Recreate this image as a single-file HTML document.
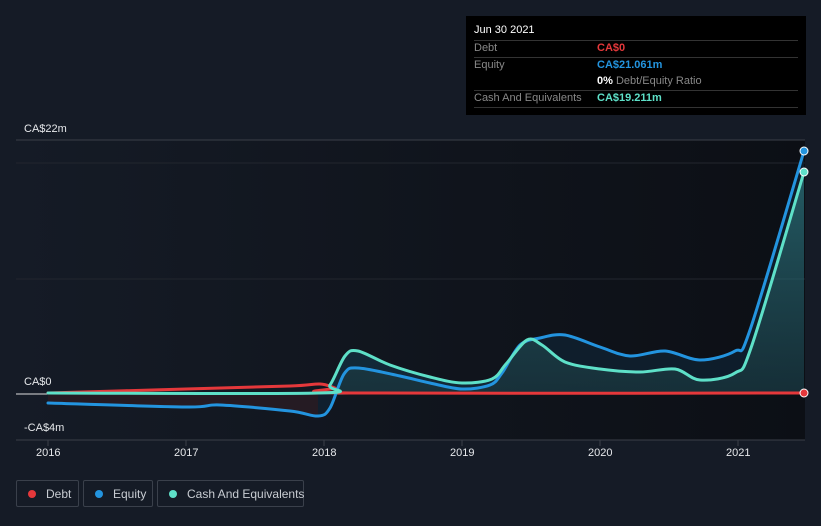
<!DOCTYPE html>
<html><head><meta charset="utf-8"><style>
html,body{margin:0;width:821px;height:526px;overflow:hidden}
body{background:#151b26;font-family:"Liberation Sans",sans-serif;position:relative}
.tt{position:absolute;left:466px;top:16px;width:340px;height:99px;background:#000;}
.tt div{position:absolute;font-size:11px;white-space:nowrap}
.ln{position:absolute;left:8px;width:324px;height:1px;background:#333}
.lg{position:absolute;top:480px;height:27px;border:1px solid #3a404b;border-radius:2px;color:#c8ccd2;font-size:12px;line-height:26px;box-sizing:border-box;white-space:nowrap}
.dot{display:inline-block;width:8px;height:8px;border-radius:50%;margin:0 10px 0 11px;vertical-align:0}
.lbl{position:absolute;color:#e6e8eb;font-size:11px}
</style></head><body>
<svg width="821" height="526" style="position:absolute;left:0;top:0">
<defs>
<linearGradient id="bg" x1="0" x2="1" y1="0" y2="0"><stop offset="0" stop-color="#151b26"/><stop offset="1" stop-color="#0c0f15"/></linearGradient>
<linearGradient id="tf" x1="0" x2="0" y1="0" y2="1"><stop offset="0" stop-color="#2f7f89" stop-opacity=".9"/><stop offset="1" stop-color="#1e4a55" stop-opacity=".7"/></linearGradient>
</defs>
<rect x="16" y="140" width="789" height="300" fill="url(#bg)"/>
<line x1="16" y1="140" x2="805" y2="140" stroke="#3a3f48"/>
<line x1="16" y1="163" x2="805" y2="163" stroke="#22262e"/>
<line x1="16" y1="279" x2="805" y2="279" stroke="#22262e"/>
<line x1="16" y1="440" x2="805" y2="440" stroke="#3a3f48"/>
<line x1="16" y1="394" x2="805" y2="394" stroke="#ddd" stroke-width="1"/>
<g stroke="#3a3f48"><line x1="48" y1="440" x2="48" y2="446"/><line x1="186" y1="440" x2="186" y2="446"/><line x1="324" y1="440" x2="324" y2="446"/><line x1="462" y1="440" x2="462" y2="446"/><line x1="600" y1="440" x2="600" y2="446"/><line x1="738" y1="440" x2="738" y2="446"/></g>
<path id="fc" fill="url(#tf)" opacity=".75"/>
<path id="fe" fill="#0f2335" opacity=".7"/>
<path id="fd" fill="#2a1a20" opacity=".8"/>
<g fill="none" stroke-width="3" stroke-linejoin="round" stroke-linecap="round">
<path id="ld" stroke="#e5383b"/>
<path id="le" stroke="#2394df"/>
<path id="lc" stroke="#5ee0c8"/>
</g>
<circle cx="804" cy="151" r="4" fill="#2394df" stroke="#fff"/>
<circle cx="804" cy="172" r="4" fill="#5ee0c8" stroke="#fff"/>
<circle cx="804" cy="393" r="4" fill="#e5383b" stroke="#fff"/>
</svg>
<script>
var D=[[48,393],[186,389],[290,386],[320,384],[335,388],[350,393],[804,393]];
var E=[[48,403],[186,407],[220,405],[290,411],[318,416],[330,408],[344,374],[358,368],[400,376],[430,383],[462,389],[490,385],[502,373],[520,345],[540,338],[565,335],[600,347],[630,356],[665,351],[700,360],[735,351],[750,330],[804,151]];
var C=[[48,393],[318,393],[330,385],[345,356],[358,351],[390,365],[430,377],[462,383],[492,379],[506,364],[527,340],[542,345],[565,362],[600,369],[640,372],[675,369],[700,380],[735,373],[752,345],[804,172]];
function sp(p){var s="M"+p[0];for(var i=0;i<p.length-1;i++){var a=p[i-1]||p[i],b=p[i],c=p[i+1],d=p[i+2]||c,t=.16;
s+=" C"+(b[0]+(c[0]-a[0])*t)+","+(b[1]+(c[1]-a[1])*t)+" "+(c[0]-(d[0]-b[0])*t)+","+(c[1]-(d[1]-b[1])*t)+" "+c;}return s;}
function rv(p){return sp(p.slice().reverse()).replace("M","L");}
document.getElementById("ld").setAttribute("d",sp(D));
document.getElementById("le").setAttribute("d",sp(E));
document.getElementById("lc").setAttribute("d",sp(C));
document.getElementById("fc").setAttribute("d",sp(C)+" L804,393 L48,393Z");
document.getElementById("fe").setAttribute("d",sp(E)+rv(C)+"Z");
document.getElementById("fd").setAttribute("d",sp(E.slice(0,5))+" L318,393 L48,393Z");
</script>
<div class="lbl" style="left:24px;top:123px">CA$22m</div>
<div class="lbl" style="left:24px;top:376px">CA$0</div>
<div class="lbl" style="left:24px;top:422px">-CA$4m</div>
<div class="lbl" style="left:36px;top:447px">2016</div>
<div class="lbl" style="left:174px;top:447px">2017</div>
<div class="lbl" style="left:312px;top:447px">2018</div>
<div class="lbl" style="left:450px;top:447px">2019</div>
<div class="lbl" style="left:588px;top:447px">2020</div>
<div class="lbl" style="left:726px;top:447px">2021</div>
<div class="tt">
<div style="left:8px;top:8px;color:#fff">Jun 30 2021</div>
<div class="ln" style="top:24px"></div>
<div style="left:8px;top:26px;color:#888">Debt</div><div style="left:131px;top:26px;color:#e5383b;font-weight:bold">CA$0</div>
<div class="ln" style="top:41px"></div>
<div style="left:8px;top:43px;color:#888">Equity</div><div style="left:131px;top:43px;color:#2394df;font-weight:bold">CA$21.061m</div>
<div style="left:131px;top:59px;color:#888"><b style="color:#fff">0%</b> Debt/Equity Ratio</div>
<div class="ln" style="top:74px"></div>
<div style="left:8px;top:76px;color:#888">Cash And Equivalents</div><div style="left:131px;top:76px;color:#5ee0c8;font-weight:bold">CA$19.211m</div>
<div class="ln" style="top:91px"></div>
</div>
<div class="lg" style="left:16px;width:63px"><span class="dot" style="background:#e5383b"></span>Debt</div>
<div class="lg" style="left:83px;width:70px"><span class="dot" style="background:#2394df"></span>Equity</div>
<div class="lg" style="left:157px;width:147px"><span class="dot" style="background:#5ee0c8"></span>Cash And Equivalents</div>
</body></html>
